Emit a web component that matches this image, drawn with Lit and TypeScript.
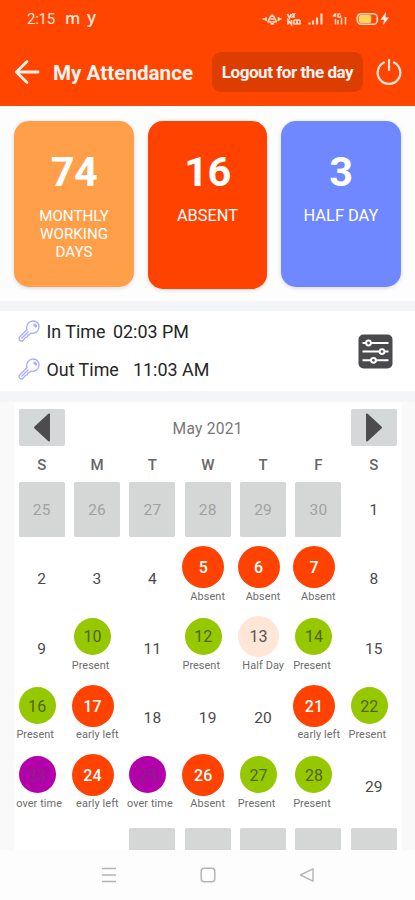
import { LitElement, html, css, svg } from "lit";
import { customElement, property } from "lit/decorators.js";

type Status = "absent" | "early" | "present" | "half" | "over";
interface Day {
  n: number;
  outside?: boolean;
  status?: Status;
}

const LABELS: Record<Status, string> = {
  absent: "Absent",
  early: "early left",
  present: "Present",
  half: "Half Day",
  over: "over time",
};

const STATUS: Record<number, Status> = {
  5: "absent", 6: "absent", 7: "absent",
  10: "present", 12: "present", 13: "half", 14: "present",
  16: "present", 17: "early", 21: "early", 22: "present",
  23: "over", 24: "early", 25: "over", 26: "absent", 27: "present", 28: "present",
};

const DAYS: Day[] = [
  ...[25, 26, 27, 28, 29, 30].map((n) => ({ n, outside: true })),
  ...Array.from({ length: 29 }, (_, i) => ({ n: i + 1, status: STATUS[i + 1] })),
];

@customElement("status-bar")
class StatusBar extends LitElement {
  static styles = css`
    :host { display: flex; height: 38px; color: #ffe3d8; font-size: 15px; line-height: 38px; }
    .time { margin-left: 27px; width: 38px; letter-spacing: -0.25px; white-space: nowrap; }
    .m { font: 600 16px/36px "Open Sans", sans-serif; width: 22px; }
    .y { font: 600 17px/34px "Open Sans", sans-serif; }
    svg { margin-left: auto; margin-right: 24px; margin-top: 10px; flex: none; }
  `;
  render() {
    return html`
      <span class="time">2:15</span><span class="m">m</span><span class="y">y</span>
      <svg width="130" height="18" viewBox="261 10 130 18" fill="none" stroke="#ffd9ca">
        <path d="M267.500 22c2-1 1.600-5.500 4.700-7c3 1.500 2.700 6 4.700 7zM270.500 23.800h3.600M270.500 19h3.600M266 17v4M278.500 17v4M262.500 19h3M279 19h2.500" stroke-width="1.700" />
        <path d="M287.500 14l2 4 2-4M288 24.500v-4.500l3.500 4.500v-4.500M292 14h2.500l-2 3h2.500M294 20v4.500M297 20v4.500M300 20v4.500M294 20h6M294 24h6" stroke-width="1.700" />
        <path d="M309.500 24.500v-2M313 24.500v-4M317 24.500v-7M321.500 24.500v-11" stroke-width="2.200" />
        <path d="M335.500 13.500v3.500M335.500 16h-2l2-2.500M340.500 14h-2.500v3h2.500v-1.500M335.500 19v5.500M338 20v4.500M341.500 18v6.500M345.500 17v7.500" stroke-width="1.500" />
        <rect x="357.300" y="13.700" width="20" height="10.600" rx="4" stroke-width="1.600" />
        <rect x="358.800" y="15" width="12.500" height="8" rx="2" fill="#ffd65a" stroke="none" />
        <path d="M386 12l-5.500 7.800h3.500l-1 5.500 6-7.800h-3.500z" fill="#fff0e8" stroke="none" />
      </svg>
    `;
  }
}

@customElement("summary-card")
class SummaryCard extends LitElement {
  @property() value = "";
  @property() label = "";
  static styles = css`
    :host {
      display: flex; flex-direction: column; align-items: center; box-sizing: border-box;
      border-radius: 15px; color: #fff; text-align: center; padding-top: 26px;
      box-shadow: 0 1px 4px rgba(0, 0, 0, 0.16);
    }
    .value { font-weight: 700; font-size: 41.500px; line-height: 49px; letter-spacing: -0.5px; }
    .label { font-size: var(--label-size, 16.400px); line-height: 18px; margin-top: 11px; width: 90px; }
  `;
  render() {
    return html`<div class="value">${this.value}</div><div class="label">${this.label}</div>`;
  }
}

@customElement("calendar-day")
class CalendarDay extends LitElement {
  @property({ attribute: false }) day!: Day;
  static styles = css`
    :host { display: block; height: 54.500px; }
    .plain, .outside {
      height: 100%; display: flex; align-items: center; justify-content: center;
      font-size: 15.500px; color: #4a4a4a; letter-spacing: 0.2px;
    }
    .plain { padding-top: 2px; box-sizing: border-box; }
    .outside { background: #d5d7d7; color: #9fa1a1; border-radius: 1.500px; padding-top: 1px; box-sizing: border-box; }
    .marked { display: flex; flex-direction: column; width: 37px; height: 100%; align-items: center; }
    .dot {
      flex: none; display: flex; align-items: center; justify-content: center;
      width: 37px; height: 37px; margin: -2.500px 0; border-radius: 50%;
      font-size: 16px; letter-spacing: 0.1px; padding-top: 1px; box-sizing: border-box;
    }
    .absent .dot, .early .dot { width: 42px; height: 42px; margin: -5px 0; background: #ff4200; color: #fff; font-weight: 500; }
    .half .dot { width: 41px; height: 41px; margin: -4.500px 0; background: #ffe6d6; color: #555; }
    .present .dot { background: #96c800; color: #4f6420; }
    .over .dot { background: #b400aa; color: #7c2a7c; }
    .caption {
      align-self: flex-start; white-space: nowrap; font-size: 10.900px; line-height: 14px;
      margin-top: 6.500px; color: #6c6c6c;
    }
    .absent .caption { margin-left: 5.500px; letter-spacing: 0.1px; }
    .early .caption { margin-left: 2px; letter-spacing: 0.1px; }
    .present .caption { margin-left: -2.300px; letter-spacing: 0.05px; }
    .half .caption { margin-left: 2.200px; letter-spacing: 0.1px; }
    .over .caption { margin-left: -2.500px; letter-spacing: 0.1px; }
  `;
  render() {
    const { n, outside, status } = this.day;
    if (outside) return html`<div class="outside">${n}</div>`;
    if (!status) return html`<div class="plain">${n}</div>`;
    return html`<div class="marked ${status}">
      <div class="dot">${n}</div>
      <div class="caption">${LABELS[status]}</div>
    </div>`;
  }
}

const key = svg`<path d="M9 9.500C7.600 5 11 1 15 1C19 1 21.300 4 21 7.500C20.500 11.500 17 14 12.800 13.200L11.200 14.800L10 15L9.300 16.800L7.600 17.400L4.800 20.600C3.500 21.700 1 20.500 1 18.500C1 17.900 1.400 17.300 2 16.700zM3.500 18.500L10.500 11.500M15.500 4.500L17.800 7C19 5.500 17.500 3.800 15.500 4.500" />`;

@customElement("app-root")
class AppRoot extends LitElement {
  static styles = css`
    :host {
      display: flex; flex-direction: column; width: 415px; height: 900px; overflow: hidden;
      background: #fdfdfd; font-family: Roboto, sans-serif; color: #262626;
    }
    .header { flex: none; height: 106px; background: #ff4500; box-sizing: border-box; }
    .toolbar { display: flex; align-items: center; height: 40px; margin-top: 14px; color: #fff4ef; }
    .back { margin-left: 14px; width: 26px; flex: none; }
    .title { margin: 2px 0 0 13px; width: 159px; font-weight: 700; font-size: 20.600px; letter-spacing: 0.02px; white-space: nowrap; }
    .logout {
      width: 151px; height: 40px; border-radius: 9px; background: #dd3d00; text-align: center;
      font-weight: 700; font-size: 17px; letter-spacing: -0.45px; line-height: 40px; white-space: nowrap;
    }
    .power { margin-left: 12px; flex: none; }
    .cards { flex: none; display: flex; align-items: flex-start; gap: 14px; padding: 14.500px 14.300px 0; box-sizing: border-box; height: 195px; }
    summary-card { width: 119.700px; height: 166.500px; }
    .working { background: #ff9f4a; --label-size: 15.200px; }
    .missed { background: #ff4200; height: 168.500px; }
    .half { background: #7088ff; }
    .times { flex: none; display: flex; height: 80px; background: #fff; border: solid #f4f5f9; border-width: 10px 0 11px; }
    .rows { padding: 1.500px 0 0 18px; width: 340px; box-sizing: border-box; }
    .row { display: flex; align-items: center; height: 38.200px; font-size: 17.900px; white-space: nowrap; }
    .row svg { width: 22px; margin: -2px 6.500px 0 0; fill: none; stroke: #aab0f6; stroke-width: 1.400; stroke-linejoin: round; }
    .in { width: 66.500px; }
    .out { width: 86.500px; }
    .filter { margin: 22.500px 0 0 18px; }
    .body { flex: none; height: 448px; overflow: hidden; padding: 0 13.500px 0 14px; background: #f9f9fa; }
    .calendar { background: #fff; height: 448px; overflow: hidden; }
    .month { display: flex; justify-content: space-between; align-items: center; padding: 7px 4.700px 0; height: 37px; }
    .month span { font-size: 15.600px; color: #777; letter-spacing: 0.25px; padding-top: 2px; }
    .step { width: 46px; height: 37px; background: #d5d8d8; border-radius: 2px; }
    .grid { display: grid; grid-template-columns: repeat(7, 55.360px); }
    .week { margin-top: 9px; height: 27px; line-height: 20px; font-size: 15px; font-weight: 500; color: #666; text-align: center; }
    .days { row-gap: 14.700px; }
    calendar-day { margin: 0 4.700px; }
    .blank { height: 54.500px; margin: 0 4.700px; background: #d5d7d7; border-radius: 1.500px; }
    .offset { grid-column: 3; }
    .nav { flex: 1; display: flex; align-items: center; justify-content: center; gap: 83px; }
  `;
  render() {
    return html`
      <div class="header">
        <status-bar></status-bar>
        <div class="toolbar">
          <svg class="back" width="26" height="26" viewBox="0 0 26 26" fill="none" stroke="#fff0e8" stroke-width="2.800" stroke-linecap="round" stroke-linejoin="round">
            <path d="M24 13H2.500M13 2.500L2.300 13L13 23.500" />
          </svg>
          <div class="title">My Attendance</div>
          <div class="logout">Logout for the day</div>
          <svg class="power" width="28" height="28" viewBox="0 0 28 28" fill="none" stroke="#ffe6dc" stroke-width="2.200" stroke-linecap="round">
            <path d="M9 4.500A11.300 11.300 0 1 0 19 4.500M14 2v10" />
          </svg>
        </div>
      </div>
      <div class="cards">
        <summary-card class="working" value="74" label="MONTHLY WORKING DAYS"></summary-card>
        <summary-card class="missed" value="16" label="ABSENT"></summary-card>
        <summary-card class="half" value="3" label="HALF DAY"></summary-card>
      </div>
      <div class="times">
        <div class="rows">
          <div class="row"><svg height="22" viewBox="0 0 22 22">${key}</svg><span class="in">In Time</span><span>02:03 PM</span></div>
          <div class="row"><svg height="22" viewBox="0 0 22 22">${key}</svg><span class="out">Out Time</span><span>11:03 AM</span></div>
        </div>
        <svg class="filter" width="35" height="35" viewBox="0 0 35 35">
          <rect x=".5" y=".5" width="34" height="34" rx="5" fill="#4a4a4c" />
          <g stroke="#fff" stroke-width="2" fill="#4a4a4c">
            <path d="M4.500 9h26M4.500 17.600h26M4.500 26.300h26" />
            <circle cx="10.500" cy="9" r="2.400" /><circle cx="24" cy="17.600" r="2.400" /><circle cx="15.500" cy="26.300" r="2.400" />
          </g>
        </svg>
      </div>
      <div class="body">
        <div class="calendar">
          <div class="month">
            <svg class="step" viewBox="0 0 46 37"><path d="M16 18.500L30 5.500V31.500z" fill="#4c4c4c" stroke="#4c4c4c" stroke-width="2" stroke-linejoin="round" /></svg>
            <span>May 2021</span>
            <svg class="step" viewBox="0 0 46 37"><path d="M30 18.500L16 5.500V31.500z" fill="#4c4c4c" stroke="#4c4c4c" stroke-width="2" stroke-linejoin="round" /></svg>
          </div>
          <div class="grid week">${["S", "M", "T", "W", "T", "F", "S"].map((d) => html`<span>${d}</span>`)}</div>
          <div class="grid days">
            ${DAYS.map((d) => html`<calendar-day .day=${d}></calendar-day>`)}
            <div class="blank offset"></div>
            ${[0, 1, 2, 3].map(() => html`<div class="blank"></div>`)}
          </div>
        </div>
      </div>
      <div class="nav">
        <svg width="16" height="18" viewBox="0 0 16 18" stroke="#b4b4b4" stroke-width="1.600"><path d="M1 2.500h14M1 9h14M1 15.500h14" /></svg>
        <svg width="16" height="18" viewBox="0 0 16 18" fill="none" stroke="#b4b4b4" stroke-width="1.500"><rect x="1.200" y="2.200" width="13.600" height="13.600" rx="3" /></svg>
        <svg width="16" height="18" viewBox="0 0 16 18" fill="none" stroke="#b4b4b4" stroke-width="1.400" stroke-linejoin="round"><path d="M1.500 9L14 2.800V15.200z" /></svg>
      </div>
    `;
  }
}
